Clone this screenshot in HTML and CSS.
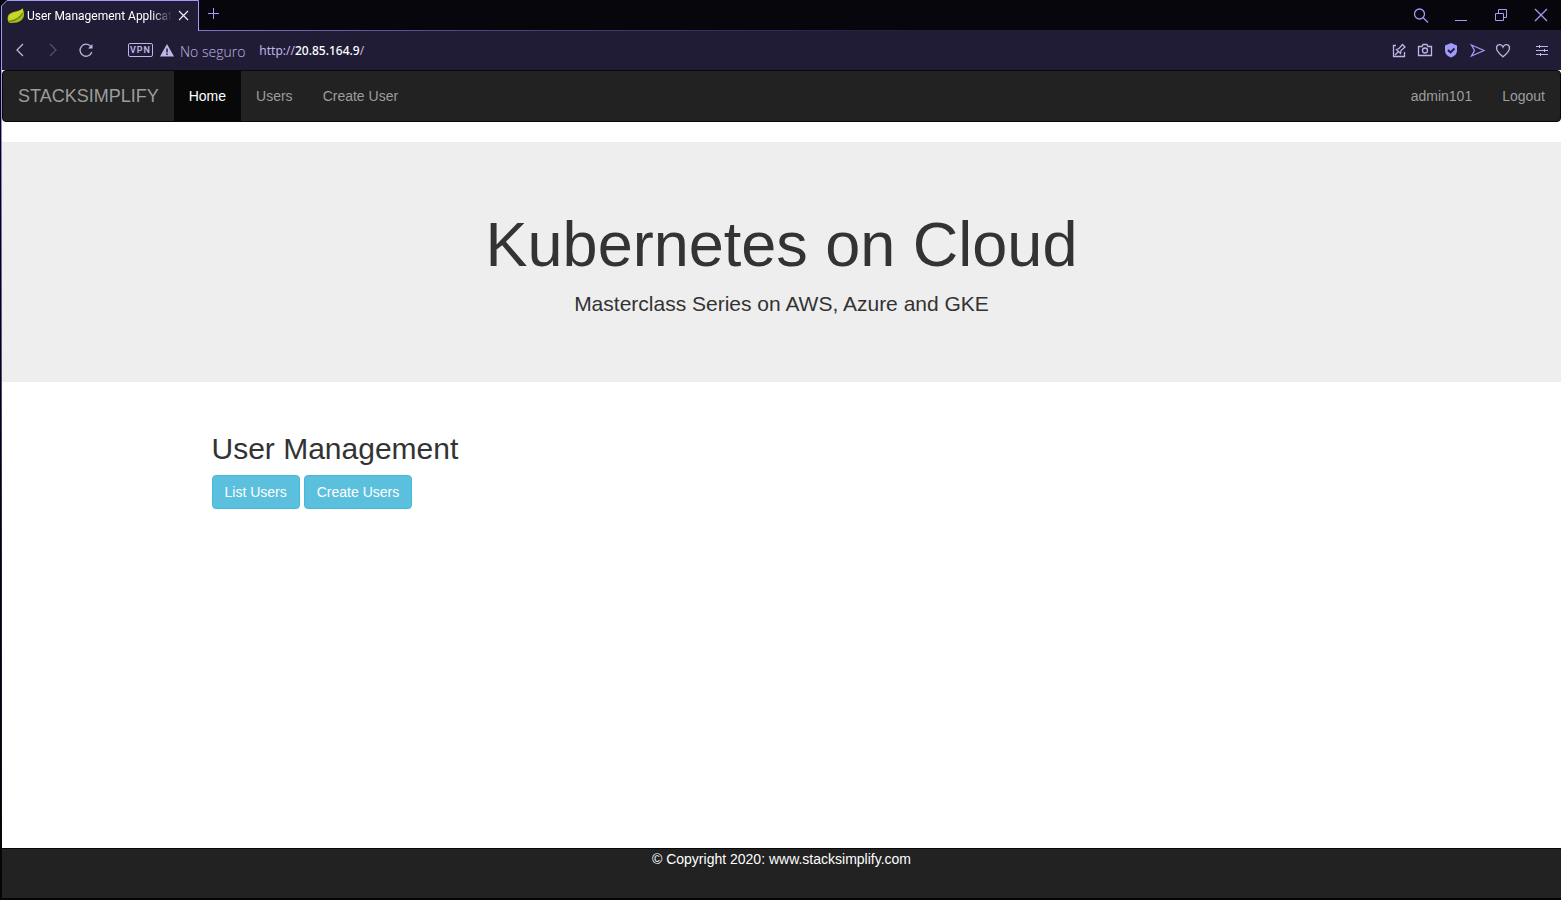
FILE: index.html
```html
<!DOCTYPE html>
<html lang="en">
<head>
<meta charset="utf-8">
<title>User Management Application</title>
<link rel="stylesheet" href="styles.css">
</head>
<body>
<div class="window">
  <header class="chrome">
    <div class="tabstrip">
      <div class="tab">
        <svg class="tab-outline" width="198" height="31" viewBox="0 0 198 31" aria-hidden="true"><path d="M0 31V6L6 0H198V31z" fill="#211c36"/><path d="M.5 31V6L6 .5H197.500V31" fill="none" stroke="#a09af8"/></svg>
        <svg class="leaf" width="18" height="16" viewBox="0 0 18 16" aria-hidden="true"><path d="M15.500 0C14 3 9 3 5 4.500 1 6 0 9 1 13c.4 1.500 1.500 2 3 2 8 .2 13-3 13-8.500C17 4 16.300 2 15.500 0z" fill="#a6bd16"/><path d="M15.500 1C13 4 6 4 3 6.500 1 8.500 1.500 11 2 12 8 11.500 13 9 16 4z" fill="#c8d62c"/><path d="M2 13.500C8 13 13 10 15.500 5" fill="none" stroke="#668015" stroke-width="1.200"/></svg>
        <span class="tab-title">User Management Applicat</span>
        <button class="icon-btn tab-close" aria-label="Close tab"><svg width="11" height="11" viewBox="0 0 11 11"><path d="M1 1l9 9M10 1l-9 9" stroke="#f0eefc" stroke-width="1.200"/></svg></button>
      </div>
      <button class="icon-btn new-tab" aria-label="New tab"><svg width="12" height="12" viewBox="0 0 12 12"><path d="M5.500 0v11M0 5.500h11" stroke="#a09af8"/></svg></button>
      <div class="window-controls">
        <button class="icon-btn" aria-label="Search"><svg width="16" height="16" viewBox="0 0 16 16"><circle cx="6.500" cy="6" r="5"/><path d="M10 9.500l5 5"/></svg></button>
        <button class="icon-btn" aria-label="Minimize"><svg width="16" height="16" viewBox="0 0 16 16"><path d="M2 12.500h12" stroke-width="1"/></svg></button>
        <button class="icon-btn" aria-label="Restore"><svg width="16" height="16" viewBox="0 0 16 16"><path d="M2.500 5.500h8v7h-8zM5.500 5.500v-4h8v8h-3" stroke-width="1"/></svg></button>
        <button class="icon-btn" aria-label="Close"><svg width="16" height="16" viewBox="0 0 16 16"><path d="M2 1l12 12M14 1L2 13"/></svg></button>
      </div>
    </div>
    <div class="toolbar">
      <div class="nav-buttons">
        <button class="icon-btn" aria-label="Back"><svg width="16" height="16" viewBox="0 0 16 16"><path d="M11 1L5 7l6 6"/></svg></button>
        <button class="icon-btn dim" aria-label="Forward"><svg width="16" height="16" viewBox="0 0 16 16"><path d="M5 1l6 6-6 6"/></svg></button>
        <button class="icon-btn" aria-label="Reload"><svg width="16" height="16" viewBox="0 0 16 16"><path d="M12.800 3.500A6 6 0 1 0 13.800 9"/><path d="M14.500 1v4.500H10z" fill="currentColor" stroke="none"/></svg></button>
      </div>
      <button class="vpn">VPN</button>
      <svg class="warn" width="14" height="13" viewBox="0 0 14 13" aria-hidden="true"><path d="M7 0l7 12.500H0z" fill="#c0b5e4"/><path d="M7 4.500v4M7 9.500v1.500" stroke="#211c36" stroke-width="1.500"/></svg>
      <span class="insecure">No seguro</span>
      <span class="url">http://<b>20.85.164.9</b>/</span>
      <div class="tools">
        <button class="icon-btn" aria-label="Edit page"><svg width="16" height="16" viewBox="0 0 16 16"><path d="M5 2.500H2.500v11h11V9M4 12l3.500-3.500M5.500 6.500l4 4 .5-3 4-3.500-2.500-2.500L8 5.500z"/></svg></button>
        <button class="icon-btn" aria-label="Snapshot"><svg width="16" height="16" viewBox="0 0 16 16"><path d="M1.500 3.500H5l1-2h4l1 2h3.500v9h-13z"/><circle cx="8" cy="7.500" r="2.500"/></svg></button>
        <button class="icon-btn" aria-label="Ad blocker"><svg width="16" height="16" viewBox="0 0 16 16"><path d="M8 0l6 2.500V7.500c0 3.500-2 5.500-6 7-4-1.500-6-3.500-6-7V2.500z" fill="#a09af8" stroke="none"/><path d="M5 7L7.500 9.500l4-4" stroke="#211c36" stroke-width="1.800"/></svg></button>
        <button class="icon-btn violet" aria-label="My flow"><svg width="16" height="16" viewBox="0 0 16 16"><path d="M2.500 2L15 7.500 2.500 13l3-5.500z"/></svg></button>
        <button class="icon-btn" aria-label="Bookmark"><svg width="16" height="16" viewBox="0 0 16 16"><path d="M8 13.800C4 10.500 1.500 8 1.500 5 1.500 1 6.500 .5 8 4 9.500 .5 14.500 1 14.500 5 14.500 8 12 10.500 8 13.800z"/></svg></button>
        <button class="icon-btn setup" aria-label="Easy setup"><svg width="16" height="16" viewBox="0 0 16 16"><path d="M2 3.500h12M2 7.500h12M2 11.500h12M5.500 2v3M10.500 6v3M6.500 10v3" stroke-width="1"/></svg></button>
      </div>
    </div>
  </header>

  <div class="page">
    <nav class="navbar">
      <a class="brand" href="#">STACKSIMPLIFY</a>
      <a class="nav-link active" href="#">Home</a>
      <a class="nav-link" href="#">Users</a>
      <a class="nav-link" href="#">Create User</a>
      <a class="nav-link user" href="#">admin101</a>
      <a class="nav-link" href="#">Logout</a>
    </nav>
    <section class="jumbotron">
      <h1>Kubernetes on Cloud</h1>
      <p>Masterclass Series on AWS, Azure and GKE</p>
    </section>
    <main class="container">
      <h2>User Management</h2>
      <div class="actions">
        <button class="btn">List Users</button>
        <button class="btn">Create Users</button>
      </div>
    </main>
    <footer class="footer">© Copyright 2020: www.stacksimplify.com</footer>
  </div>
</div>
</body>
</html>
```
FILE: styles.css
```css
* { box-sizing: border-box; }

body {
  margin: 0;
  background: #050409;
  color: #333;
  font: 14px/20px "Liberation Sans", Arial, sans-serif;
}

a { text-decoration: none; }

button { font: inherit; cursor: pointer; }

.window {
  display: flex;
  flex-direction: column;
  min-height: 100vh;
  padding: 0 0 2px 1px;
}

.chrome {
  color: #c0b5e4;
  font-family: "Open Sans", "Noto Sans", sans-serif;
}

.icon-btn {
  display: flex;
  padding: 0;
  border: 0;
  background: none;
  color: inherit;
}

.icon-btn svg {
  display: block;
  fill: none;
  stroke: currentColor;
  stroke-width: 1.3;
}

.tabstrip {
  display: flex;
  align-items: center;
  height: 31px;
  background:
    linear-gradient(90deg, #a09af8, #4b4780 30%, #211c36 60%) bottom / 100% 1px no-repeat,
    #07060d;
}

.tab {
  position: relative;
  display: flex;
  align-items: center;
  width: 198px;
  height: 31px;
  padding: 0 10px 0 6px;
}

.tab-outline {
  position: absolute;
  inset: 0;
}

.leaf, .tab-title, .tab-close { position: relative; }

.leaf { flex: none; }

.tab-title {
  flex: 1;
  min-width: 0;
  margin: 0 6px 0 2px;
  white-space: nowrap;
  color: #fff;
  font: 12px/20px Roboto, sans-serif;
  mask-image: linear-gradient(90deg, #000 86%, transparent);
}

.new-tab { margin: 0 auto 4px 9px; }

.new-tab svg { stroke-width: 1; }

.window-controls {
  display: flex;
  gap: 24px;
  margin-right: 12px;
  color: #a09af8;
}

.toolbar {
  display: flex;
  align-items: center;
  height: 39px;
  padding: 0 11px 0 10px;
  border-left: 1px solid #a09af8;
  background: #211c36;
}

.nav-buttons {
  display: flex;
  gap: 17px;
  margin-right: 34px;
}

.dim { color: #544c70; }

.vpn {
  width: 25px;
  height: 14px;
  margin-bottom: 1px;
  padding: 0;
  border: 1px solid #c0b5e4;
  border-radius: 2px;
  background: none;
  color: #c0b5e4;
  font: 600 9px/12px Roboto, sans-serif;
  letter-spacing: 1px;
}

.warn { margin: 0 6px 0 7px; }

.insecure {
  padding-top: 3px;
  font-weight: 300;
}

.url {
  margin-left: 14px;
  font: 12px/20px "Noto Sans", sans-serif;
}

.url b {
  color: #fff;
  font-weight: 500;
}

.tools {
  display: flex;
  gap: 10px;
  margin-left: auto;
}

.violet { color: #a09af8; }

.setup { margin-left: 13px; }

.page {
  flex: 1;
  display: flex;
  flex-direction: column;
  border-left: 1px solid;
  border-image: linear-gradient(#a09af8, #211c36 60%, #050409) 1;
  background: #fff;
}

.navbar {
  display: flex;
  margin-bottom: 20px;
  border: 1px solid #080808;
  border-radius: 4px;
  background: #222;
}

.brand, .nav-link {
  padding: 15px;
  color: #9d9d9d;
}

.brand { font-size: 18px; }

.nav-link.active {
  background: #080808;
  color: #fff;
}

.user { margin-left: auto; }

.jumbotron {
  margin-bottom: 30px;
  padding: 48px 0;
  background: #eee;
  text-align: center;
}

.jumbotron h1 {
  margin: 20px 0 10px;
  font-size: 63px;
  font-weight: 500;
  line-height: 69px;
}

.jumbotron p {
  margin: 0 0 15px;
  font-size: 21px;
  line-height: 30px;
}

.container {
  width: 100%;
  max-width: 1170px;
  margin: 0 auto;
  padding: 0 15px;
}

.container h2 {
  margin: 20px 0 10px;
  font-size: 30px;
  font-weight: 500;
  line-height: 33px;
}

.actions {
  display: flex;
  gap: 4px;
}

.btn {
  padding: 6px 12px;
  border: 1px solid #46b8da;
  border-radius: 4px;
  background: #5bc0de;
  color: #fff;
}

.footer {
  height: 50px;
  margin-top: auto;
  border-top: 1px solid #080808;
  background: #222;
  color: #fff;
  text-align: center;
}
```
